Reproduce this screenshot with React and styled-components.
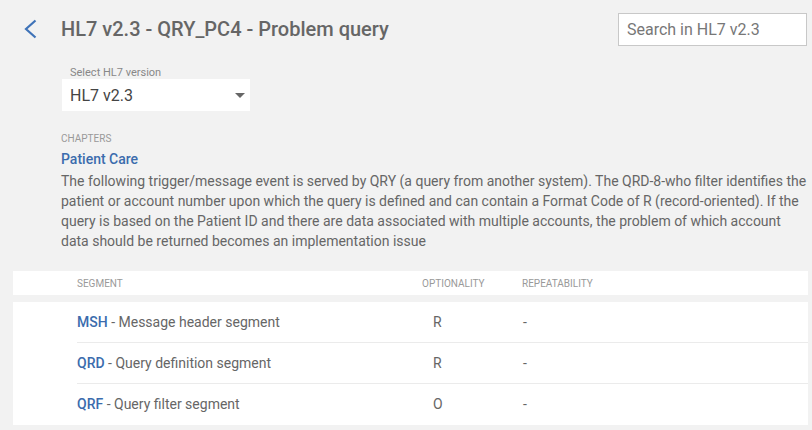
import React from "react";
import styled, { createGlobalStyle } from "styled-components";

const Global = createGlobalStyle`
  html, body {
    margin: 0;
    background: #f2f2f2;
    font-family: Roboto, "Liberation Sans", sans-serif;
  }
`;

const Page = styled.div`
  width: 812px;
  height: 430px;
  overflow: hidden;
  background: #f2f2f2;
`;

const Header = styled.div`
  display: flex;
  align-items: center;
  height: 58px;
  padding: 0 5px 0 23px;
`;

const Back = styled.button`
  width: 16px;
  height: 24px;
  padding: 0;
  border: 0;
  background: none;
  display: flex;
  align-items: center;
  cursor: pointer;
`;

const Title = styled.h1`
  flex: 1;
  margin: 0 0 0 22px;
  font-size: 20px;
  font-weight: 500;
  color: #666;
`;

const Search = styled.input`
  width: 189px;
  height: 33px;
  box-sizing: border-box;
  border: 1px solid #c8c8c8;
  background: #fff;
  padding: 0 8px;
  font-family: inherit;
  font-size: 16px;
  color: #555;
  outline: none;
  &::placeholder { color: #777; }
`;

const Content = styled.div`
  padding: 8px 4px 0 61px;
`;

const SelectLabel = styled.div`
  margin-left: 9px;
  font-size: 11px;
  color: #888;
  line-height: 13px;
`;

const Select = styled.div`
  width: 188px;
  height: 32px;
  margin-left: 1px;
  background: #fff;
  display: flex;
  align-items: center;
  justify-content: space-between;
  padding: 0 5px 0 8px;
  box-sizing: border-box;
  font-size: 16px;
  color: #444;
`;

const Caret = styled.span`
  width: 0;
  height: 0;
  border-left: 5px solid transparent;
  border-right: 5px solid transparent;
  border-top: 5px solid #666;
  margin-top: 1px;
`;

const SectionLabel = styled.div`
  margin-top: 22px;
  font-size: 10px;
  color: #999;
  line-height: 12px;
`;

const Chapter = styled.div`
  margin-top: 6px;
  font-size: 14px;
  font-weight: 500;
  color: #3b6cad;
  line-height: 16px;
`;

const Desc = styled.p`
  margin: 4px 0 0;
  font-size: 14px;
  line-height: 20px;
  color: #666;
`;

const Table = styled.div`
  margin: 20px 4px 0 13px;
`;

const Row = styled.div`
  display: grid;
  grid-template-columns: 345px 100px 1fr;
  align-items: center;
  margin-left: 64px;
  height: ${p => (p.$head ? "24px" : "40px")};
  border-top: ${p => (p.$first || p.$head ? "0" : "1px solid #ebebeb")};
`;

const HeadBar = styled.div`
  background: #fff;
`;

const Body = styled.div`
  background: #fff;
  margin-top: 7px;
  padding-bottom: 1px;
`;

const HeadCell = styled.div`
  font-size: 10px;
  color: #999;
  text-transform: uppercase;
`;

const Cell = styled.div`
  font-size: 14px;
  color: #666;
  padding-left: ${p => p.$indent || 0}px;
`;

const Code = styled.span`
  color: #3b6cad;
  font-weight: 500;
`;

const segments = [
  { code: "MSH", name: "Message header segment", opt: "R", rep: "-" },
  { code: "QRD", name: "Query definition segment", opt: "R", rep: "-" },
  { code: "QRF", name: "Query filter segment", opt: "O", rep: "-" },
];

export default function App() {
  return (
    <Page>
      <Global />
      <Header>
        <Back aria-label="back">
          <svg width="14" height="20" viewBox="0 0 14 20">
            <path d="M12.5 1.5 L3 10 L12.5 18.5" fill="none" stroke="#3f73b8" strokeWidth="2.2" />
          </svg>
        </Back>
        <Title>HL7 v2.3 - QRY_PC4 - Problem query</Title>
        <Search placeholder="Search in HL7 v2.3" />
      </Header>
      <Content>
        <SelectLabel>Select HL7 version</SelectLabel>
        <Select>
          HL7 v2.3
          <Caret />
        </Select>
        <SectionLabel>CHAPTERS</SectionLabel>
        <Chapter>Patient Care</Chapter>
        <Desc>
          The following trigger/message event is served by QRY (a query from another system). The QRD-8-who filter identifies the patient or account number upon which the query is defined and can contain a Format Code of R (record-oriented). If the query is based on the Patient ID and there are data associated with multiple accounts, the problem of which account data should be returned becomes an implementation issue
        </Desc>
      </Content>
      <Table>
        <HeadBar>
          <Row $head>
            <HeadCell>Segment</HeadCell>
            <HeadCell>Optionality</HeadCell>
            <HeadCell>Repeatability</HeadCell>
          </Row>
        </HeadBar>
        <Body>
          {segments.map((s, i) => (
            <Row key={s.code} $first={i === 0}>
              <Cell>
                <Code>{s.code}</Code> - {s.name}
              </Cell>
              <Cell $indent={11}>{s.opt}</Cell>
              <Cell $indent={1}>{s.rep}</Cell>
            </Row>
          ))}
        </Body>
      </Table>
    </Page>
  );
}
